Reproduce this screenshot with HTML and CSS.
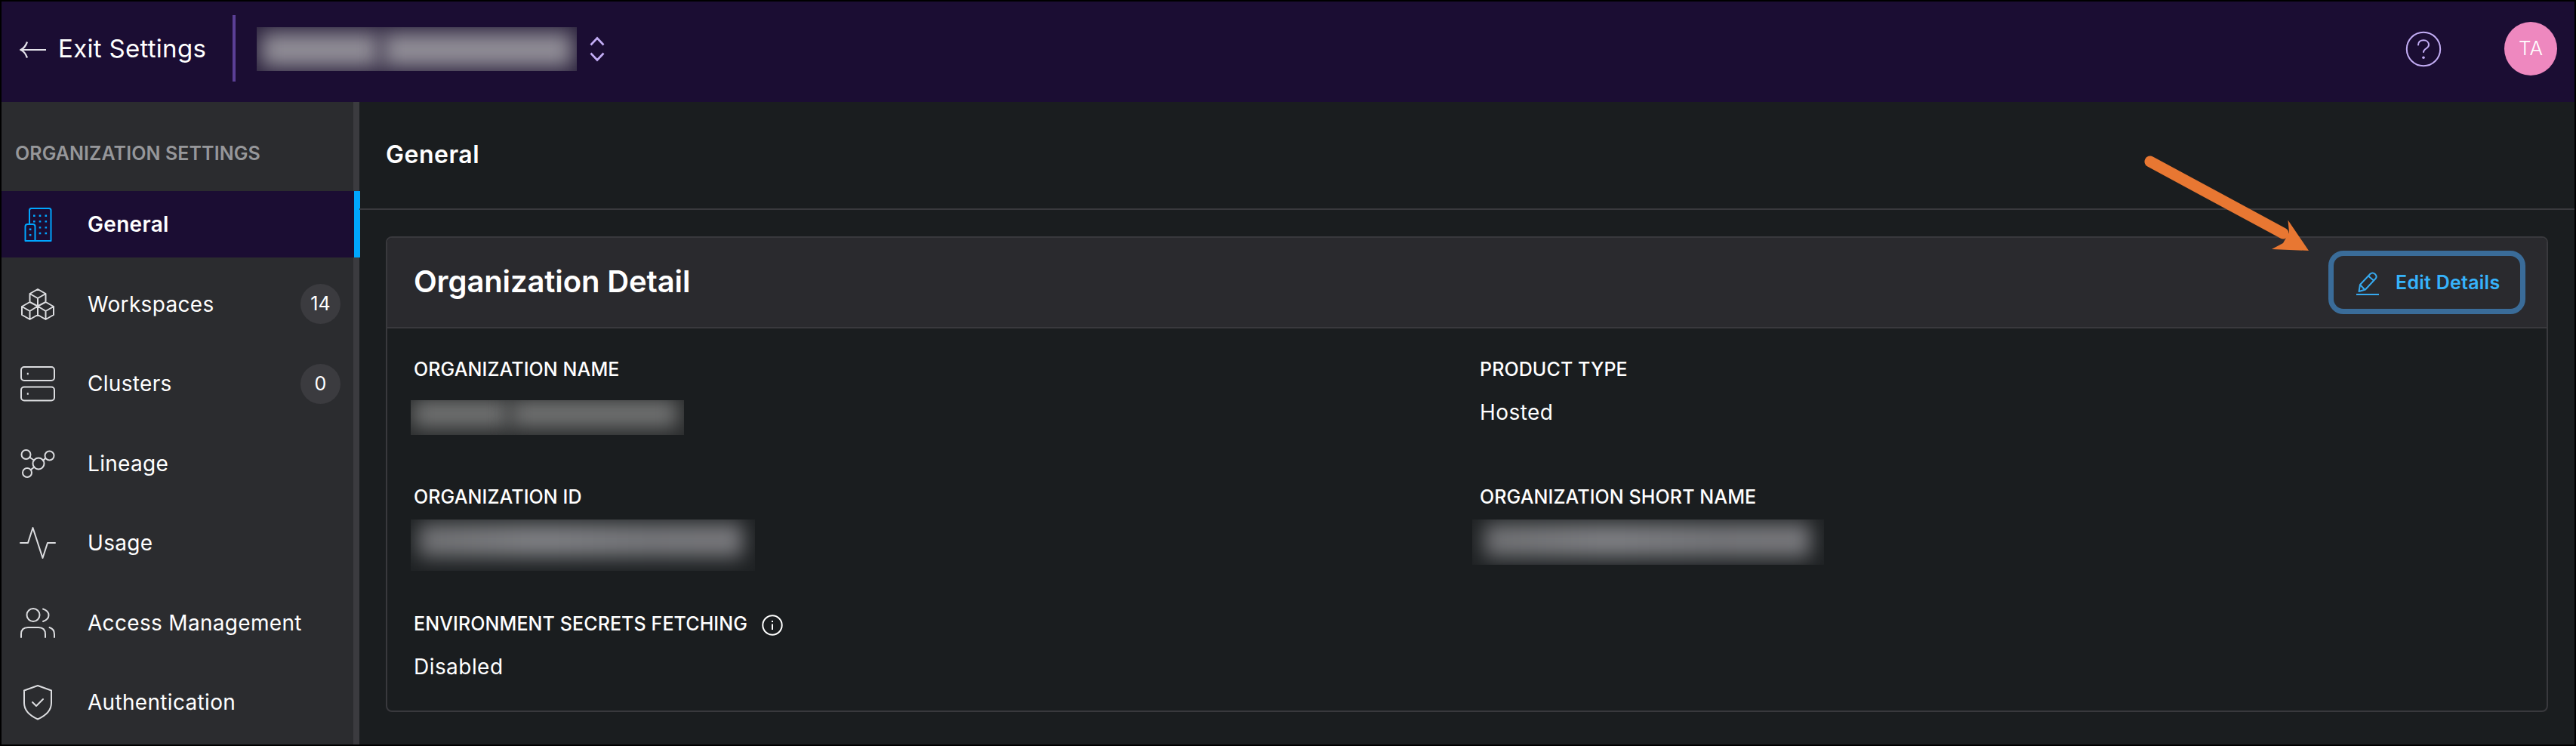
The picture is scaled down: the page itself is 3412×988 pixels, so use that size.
FILE: index.html
```html
<!DOCTYPE html>
<html lang="en">
<head>
<meta charset="utf-8">
<title>Organization Settings</title>
<link rel="stylesheet" href="styles.css">
</head>
<body>
<div class="app">
  <header class="topbar">
    <a class="exit">
      <svg class="exit-arrow" viewBox="0 0 36 26"><path d="M35 13H2M10 2.500C8 8 5 11.500 1.500 13C5 14.500 8 18 10 23.500"/></svg>
      <span class="exit-text">Exit Settings</span>
    </a>
    <span class="divider"></span>
    <span class="redacted redacted-org"><i></i><i></i></span>
    <svg class="switcher" viewBox="0 0 22 34"><path d="M2.500 11.500 11 2.500 19.500 11.500M2.500 22.500 11 31.500 19.500 22.500"/></svg>
    <svg class="help" viewBox="0 0 48 48"><circle cx="24" cy="24" r="22.200"/><path d="M17 18.500C17 14.500 20 12.200 24 12.200S31 14.700 31 18.600C31 23.500 24 23 24 28"/><circle class="dot" cx="24" cy="35.300" r="1.800"/></svg>
    <span class="avatar">TA</span>
  </header>
  <div class="body">
    <nav class="sidebar">
      <h2 class="side-title">ORGANIZATION SETTINGS</h2>
      <ul class="menu">
        <li class="item active">
          <svg class="icon" viewBox="0 0 48 48"><path d="M13 23.500V5.500Q13 3 15.500 3H39Q41.500 3 41.500 5.500V46H7.500V27Q7.500 24 10.500 24H17.500Q20.500 24 20.500 27V46"/><path class="dots" d="M18 12.700h2.600M25.700 12.700h2.600M33.500 12.700h2.600M18 20.400h2.600M25.700 20.400h2.600M33.500 20.400h2.600M25.700 28.400h2.600M33.500 28.400h2.600M25.700 36h2.600M33.500 36h2.600M12.800 30.700h2.600M12.800 38.300h2.600"/></svg>
          <span class="label">General</span>
        </li>
        <li class="item">
          <svg class="icon" viewBox="0 0 48 48"><path d="M24 4 34.500 10V21L24 26.500 13.500 21V10ZM13.500 10 24 16 34.500 10M24 16V26.500M13.500 21 24 26.500V38L13.500 44 3 38V27ZM3 27 13.500 33 24 26.500M13.500 33V44M34.500 21 24 26.500V38L34.500 44 45 38V27ZM45 27 34.500 33 24 26.500M34.500 33V44"/></svg>
          <span class="label">Workspaces</span><span class="badge">14</span>
        </li>
        <li class="item">
          <svg class="icon" viewBox="0 0 48 48"><rect x="2" y="2" width="44" height="18" rx="4"/><rect x="2" y="28.500" width="44" height="18" rx="4"/><path class="dots" d="M9.800 11h2M9.800 37.500h2"/></svg>
          <span class="label">Clusters</span><span class="badge">0</span>
        </li>
        <li class="item">
          <svg class="icon" viewBox="0 0 48 48"><circle cx="8.500" cy="12" r="6"/><circle cx="39.500" cy="13.500" r="6"/><circle cx="10" cy="36" r="6"/><circle cx="25" cy="24" r="7.500"/><path d="M13 15.500 19 19.500M34 17 31 20M15 32 19.500 28.500"/></svg>
          <span class="label">Lineage</span>
        </li>
        <li class="item">
          <svg class="icon" viewBox="0 0 48 48"><path d="M1 24H11L17.500 4 30.500 44 37 24H47"/></svg>
          <span class="label">Usage</span>
        </li>
        <li class="item">
          <svg class="icon" viewBox="0 0 48 48"><circle cx="18" cy="13.500" r="8.500"/><path d="M2 43V39Q2 30 11 30H25Q34 30 34 39V43M31 5.500C41 9 41 18.500 31 22M39.500 30Q46 32 46 39V43"/></svg>
          <span class="label">Access Management</span>
        </li>
        <li class="item">
          <svg class="icon" viewBox="0 0 48 48"><path d="M24 2 42 8.500V25C42 35 34 42 24 46.500 14 42 6 35 6 25V8.500ZM17 24 22 29 31 20"/></svg>
          <span class="label">Authentication</span>
        </li>
      </ul>
    </nav>
    <main class="main">
      <div class="page-head"><h1 class="page-title">General</h1></div>
      <section class="card">
        <div class="card-head">
          <h2 class="card-title">Organization Detail</h2>
          <button class="edit">
            <svg class="pencil" viewBox="0 0 30 32"><path d="M5 18 18.500 3.800Q21.500 1 24.800 4T25.500 10L12 24.500 3.500 27ZM16 6.500 23 12.500M5 18 11 24.500M0 31H30"/></svg>
            <span class="edit-text">Edit Details</span>
          </button>
        </div>
        <div class="fields">
          <div class="field"><span class="name">ORGANIZATION NAME</span><span class="redacted redacted-name"><i></i><i></i></span></div>
          <div class="field"><span class="name">PRODUCT TYPE</span><span class="value">Hosted</span></div>
          <div class="field"><span class="name">ORGANIZATION ID</span><span class="redacted redacted-id"><i></i></span></div>
          <div class="field"><span class="name">ORGANIZATION SHORT NAME</span><span class="redacted redacted-short"><i></i></span></div>
          <div class="field"><span class="name">ENVIRONMENT SECRETS FETCHING<svg class="info" viewBox="0 0 28 28"><circle cx="14" cy="14" r="12.700"/><path d="M14 12.500V20M14 8V10"/></svg></span><span class="value">Disabled</span></div>
        </div>
      </section>
    </main>
  </div>
  <svg class="callout" viewBox="0 0 230 140"><path class="shaft" d="M20 16 196 111"/><path d="M202.500 93.500 230 134 181 132 196 124 204 110Z"/></svg>
</div>
</body>
</html>
```
FILE: styles.css
```css
* { box-sizing: border-box; margin: 0; padding: 0; }
body { background: #000; font-family: Inter, "Liberation Sans", sans-serif; color: #fff; }
.app { position: relative; width: 3412px; height: 988px; border: 2px solid #000; background: #1a1d1f; overflow: hidden; display: flex; flex-direction: column; }
svg { fill: none; flex: none; display: block; }

.topbar { height: 133px; flex: none; background: #1b0d33; display: flex; align-items: flex-start; padding-left: 24px; }
.exit { display: flex; margin-top: 43px; width: 282px; }
.exit-arrow { width: 36px; height: 26px; margin: 8px 15px 0 0; stroke: #e4e2ea; stroke-width: 2.2; }
.exit-text { font-size: 33px; line-height: 38px; letter-spacing: .3px; white-space: nowrap; }
.divider { width: 4px; height: 88px; margin-top: 18px; background: #5b3f96; }
.switcher { width: 22px; height: 34px; margin: 46px 0 0 16px; stroke: #c3adf5; stroke-width: 2.6; }
.help { width: 48px; height: 48px; margin: 39px 0 0 auto; stroke: #c3adf5; stroke-width: 2; stroke-linecap: round; }
.help .dot { fill: #c3adf5; stroke: none; }
.avatar { width: 70px; height: 71px; margin: 27px 23px 0 83px; border-radius: 50%; background: #ee88bf; font-size: 26px; font-weight: 300; line-height: 70px; text-align: center; }

/* Hidden values: soft grey runs clipped to a hard rectangle */
.redacted { display: flex; overflow: hidden; }
.redacted i { display: block; flex: 1; filter: blur(13px); }
.redacted-org { width: 424px; height: 58px; margin: 34px 0 0 28px; padding: 7px 6px 5px; background: #2b223d; }
.redacted-org i { background: #918e97; }
.redacted-org i:first-child { flex: 0 0 156px; margin-right: 5px; }
.redacted-name { width: 362px; height: 46px; margin: 25px 0 0 -4px; padding: 0 9px 10px 3px; background: #292b2c; }
.redacted-name i { background: #737474; }
.redacted-name i:first-child { flex: 0 0 126px; margin-right: 4px; }
.redacted-id { width: 456px; height: 68px; margin: 14px 0 0 -4px; padding: 5px 16px 18px 10px; background: #1e2123; }
.redacted-short { width: 466px; height: 60px; margin: 14px 0 0 -10px; padding: 5px 18px 10px 16px; background: #1e2123; }
.redacted-id i, .redacted-short i { background: linear-gradient(90deg, #707174, #7f8084 38%, #76777b 70%, #79797d); }

.body { flex: 1; display: flex; min-height: 0; }
.sidebar { width: 474px; flex: none; background: #2b2c2f; border-right: 8px solid #3b3b3f; }
.side-title { font-size: 25px; line-height: 32px; font-weight: 600; letter-spacing: .08px; color: #96979a; padding: 52px 0 0 18px; height: 118px; white-space: nowrap; }
.menu { list-style: none; display: flex; flex-direction: column; gap: 17.500px; }
.item { height: 88px; flex: none; display: flex; align-items: center; padding: 0 17px 0 24.400px; font-size: 28px; letter-spacing: .32px; }
.item.active { background: #1b0d33; font-weight: 600; border-right: 8px solid #00a6ff; margin-right: -9px; }
.icon { width: 48px; height: 48px; margin-right: 41.600px; stroke: #dcdde0; stroke-width: 2; stroke-linejoin: round; stroke-linecap: round; }
.active .icon { stroke: #00a6ff; }
.icon .dots { stroke-width: 2.4; stroke-linecap: butt; }
.label { flex: 1; white-space: nowrap; }
.badge { width: 53px; height: 53px; border-radius: 50%; background: #3b3b3f; font-size: 25px; line-height: 53px; text-align: center; letter-spacing: 0; }

.main { flex: 1; min-width: 0; }
.page-head { height: 143px; border-bottom: 2px solid #39393d; padding: 51px 0 0 35px; }
.page-title { font-size: 32px; line-height: 38px; font-weight: 600; letter-spacing: .5px; }
.card { margin: 35px 35px 0 35px; height: 630px; border: 2px solid #39393d; border-radius: 8px; overflow: hidden; }
.card-head { height: 120px; background: #2a2a2e; border-bottom: 2px solid #39393d; display: flex; align-items: center; justify-content: space-between; padding: 0 28px 0 35px; }
.card-title { font-size: 40px; line-height: 48px; font-weight: 600; letter-spacing: -.12px; margin-bottom: 2px; }
.edit { width: 261px; height: 84px; border: 7px solid #3a6c99; border-radius: 20px; background: none; color: #36b3fb; font: 600 25px/32px Inter, sans-serif; letter-spacing: .25px; display: flex; align-items: center; padding: 0 0 0 30px; }
.pencil { width: 30px; height: 32px; margin: 2px 22px 0 0; stroke: #36a9ef; stroke-width: 2; stroke-linejoin: round; }
.edit-text { white-space: nowrap; }
.fields { display: grid; grid-template-columns: 1412px 1fr; grid-auto-rows: 168.500px; padding: 38px 0 0 35px; }
.name { font-size: 25px; line-height: 32px; font-weight: 500; letter-spacing: .1px; display: flex; white-space: nowrap; }
.value { font-size: 28px; line-height: 34px; display: block; margin-top: 24.400px; letter-spacing: .45px; }
.info { width: 28px; height: 28px; margin: 4px 0 0 19px; stroke: #fff; stroke-width: 2; }

.callout { position: absolute; left: 2826px; top: 196px; width: 230px; height: 140px; fill: #e87732; }
.callout .shaft { stroke: #e87732; stroke-width: 15; stroke-linecap: round; }
```
